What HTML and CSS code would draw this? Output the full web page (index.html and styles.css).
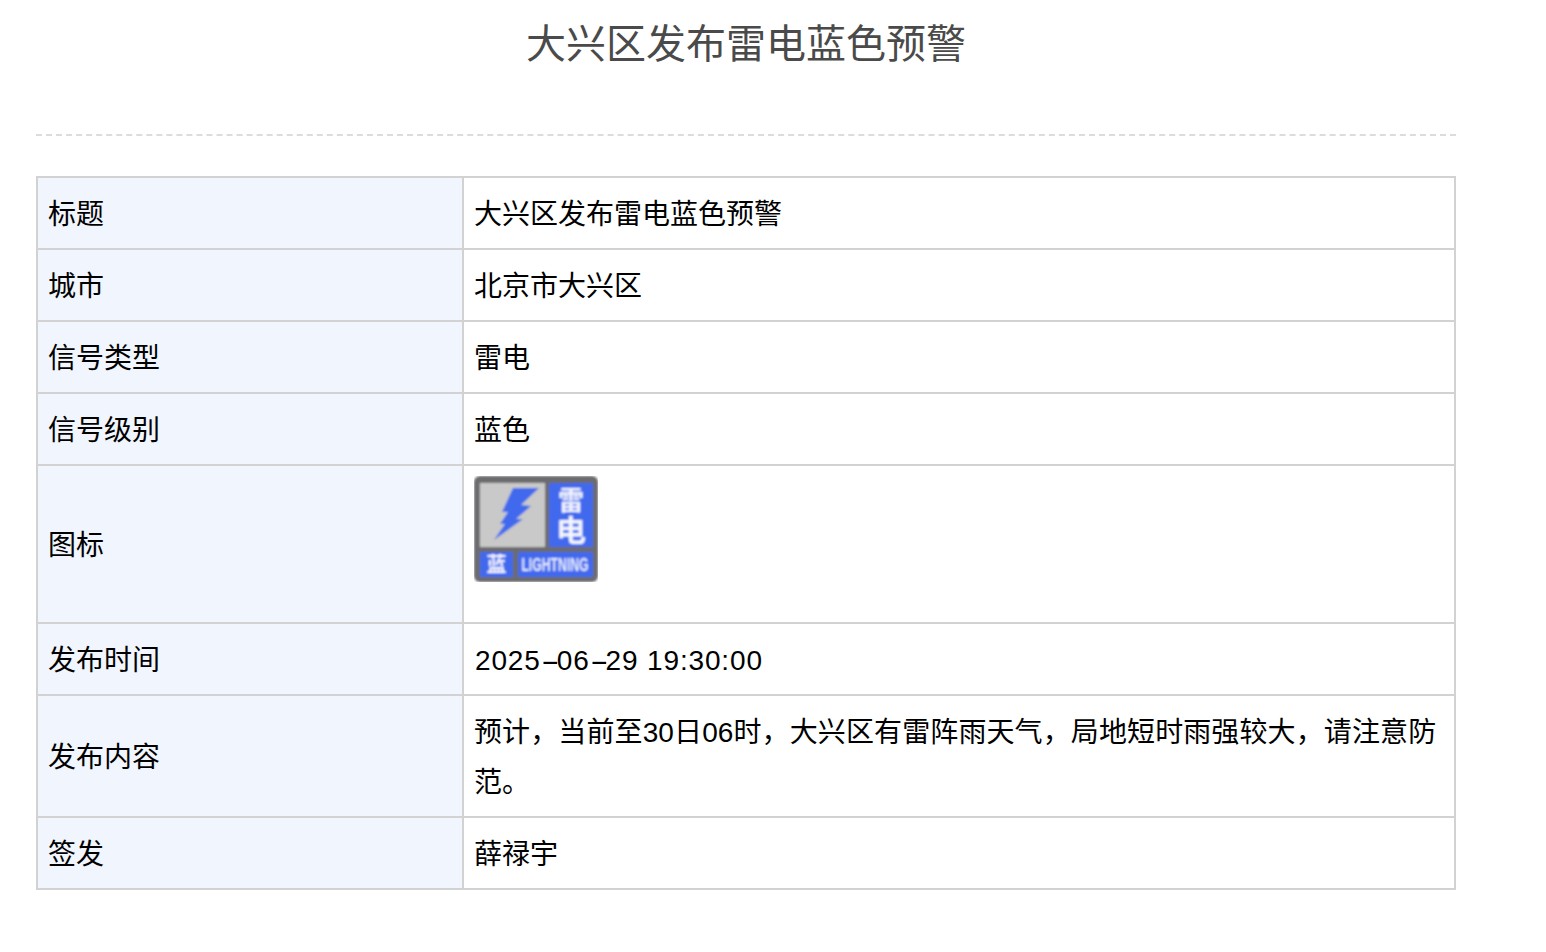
FILE: index.html
```html
<!DOCTYPE html>
<html lang="zh-CN">
<head>
<meta charset="utf-8">
<title>大兴区发布雷电蓝色预警</title>
<link rel="stylesheet" href="styles.css">
</head>
<body>
<main class="page">
  <h1 class="title">大兴区发布雷电蓝色预警</h1>
  <table class="info">
    <colgroup><col class="col-label"><col class="col-value"></colgroup>
    <tbody>
      <tr><th>标题</th><td>大兴区发布雷电蓝色预警</td></tr>
      <tr><th>城市</th><td>北京市大兴区</td></tr>
      <tr><th>信号类型</th><td>雷电</td></tr>
      <tr><th>信号级别</th><td>蓝色</td></tr>
      <tr>
        <th>图标</th>
        <td class="icon-cell">
          <svg class="signal" viewBox="0 0 124 106" width="124" height="106" role="img" aria-label="雷电蓝色预警图标">
            <defs><filter id="soft" x="-5%" y="-5%" width="110%" height="110%"><feGaussianBlur stdDeviation="0.8"/></filter></defs>
            <g filter="url(#soft)">
              <rect width="124" height="106" rx="6" fill="#6c6c6e"/>
              <rect x="6" y="7" width="65" height="64" fill="#c9c9c9"/>
              <rect x="75" y="7" width="44" height="64" fill="#3f69ee"/>
              <rect x="6" y="76" width="33" height="25" fill="#3f69ee"/>
              <rect x="44" y="76" width="75" height="25" fill="#3f69ee"/>
              <path d="M39 12 L65 12 L47 29 L57 30 L42 43 L49 43 L20 64 L31 48 L26 48 L34 36 L28 36 Z" fill="#3f69ee"/>
              <text class="sig-cn" x="97" y="34" font-size="26">雷</text>
              <text class="sig-cn" x="97" y="65" font-size="30">电</text>
              <text class="sig-cn" x="22.5" y="96" font-size="20">蓝</text>
              <text class="sig-en" transform="translate(81 95) scale(.68 1)" font-size="18">LIGHTNING</text>
            </g>
          </svg>
        </td>
      </tr>
      <tr><th>发布时间</th><td><span class="date">2025<span class="dash">-</span>06<span class="dash">-</span>29 19:30:00</span></td></tr>
      <tr><th>发布内容</th><td class="body-text">预计，当前至30日06时，大兴区有雷阵雨天气，局地短时雨强较大，请注意防范。</td></tr>
      <tr><th>签发</th><td>薛禄宇</td></tr>
    </tbody>
  </table>
</main>
</body>
</html>
```

FILE: styles.css
```css
* { box-sizing: border-box; }
html, body { margin: 0; background: #fff; }
body {
  font-family: "Liberation Sans", "Noto Sans CJK SC", sans-serif;
  color: #000;
}
.page { width: 1420px; margin-left: 36px; padding-bottom: 62px; }
.title {
  margin: 0 0 40px;
  height: 136px;
  border-bottom: 2px dashed #dcdcdc;
  font-size: 40px;
  line-height: 88px;
  font-weight: 400;
  color: #4a4a4a;
  text-align: center;
}
.info {
  width: 1420px;
  table-layout: fixed;
  border-collapse: collapse;
  font-size: 28px;
  line-height: 50px;
}
.col-label { width: 426px; }
.info th, .info td {
  border: 2px solid #d2d2d2;
  padding: 12px 10px 8px;
  text-align: left;
  font-weight: 400;
}
.info th { background: #f1f5fd; }
.info td.icon-cell { padding: 10px 10px 40px; }
.body-text { letter-spacing: 0.11px; }
.date { letter-spacing: 0.85px; margin-left: 1px; }
.dash {
  display: inline-block;
  width: 16px;
  letter-spacing: 0;
  transform: scaleX(2);
  transform-origin: left center;
}
.signal { display: block; }
.sig-cn { font-family: "Noto Sans CJK SC", sans-serif; font-weight: 700; fill: #f4f6ff; text-anchor: middle; }
.sig-en { font-family: "Liberation Sans", sans-serif; font-weight: 700; fill: #e6ebff; text-anchor: middle; }
```
